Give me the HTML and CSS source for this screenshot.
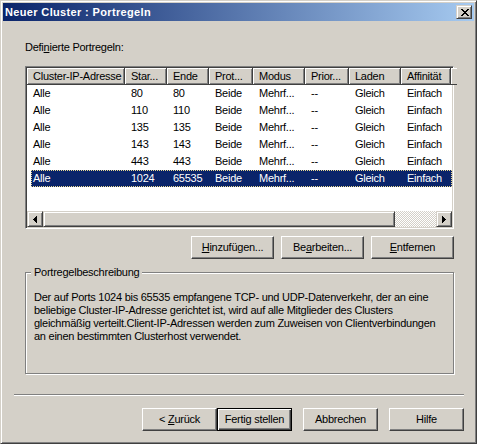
FILE: index.html
```html
<!DOCTYPE html>
<html lang="de">
<head>
<meta charset="utf-8">
<title>Neuer Cluster : Portregeln</title>
<link rel="stylesheet" href="styles.css">
</head>
<body>
<div class="window">
  <div class="titlebar">
    <span class="title">Neuer Cluster : Portregeln</span>
    <button class="close" type="button" aria-label="Schließen">
      <svg width="8" height="7" viewBox="0 0 8 7"><path d="M0 0h2v1h-2zM6 0h2v1h-2zM1 1h2v1h-2zM5 1h2v1h-2zM2 2h4v1h-4zM3 3h2v1h-2zM2 4h4v1h-4zM1 5h2v1h-2zM5 5h2v1h-2zM0 6h2v1h-2zM6 6h2v1h-2z" fill="#000"/></svg>
    </button>
  </div>
  <div class="content">
    <div class="label">Defi<u>n</u>ierte Portregeln:</div>
    <div class="listview">
      <div class="header">
        <span class="hcell">Cluster-IP-Adresse</span>
        <span class="hcell">Star...</span>
        <span class="hcell">Ende</span>
        <span class="hcell">Prot...</span>
        <span class="hcell">Modus</span>
        <span class="hcell">Prior...</span>
        <span class="hcell">Laden</span>
        <span class="hcell">Affinität</span>
        <span class="hcell filler"></span>
      </div>
      <div class="rows">
        <div class="row"><span>Alle</span><span>80</span><span>80</span><span>Beide</span><span>Mehrf...</span><span>--</span><span>Gleich</span><span>Einfach</span></div>
        <div class="row"><span>Alle</span><span>110</span><span>110</span><span>Beide</span><span>Mehrf...</span><span>--</span><span>Gleich</span><span>Einfach</span></div>
        <div class="row"><span>Alle</span><span>135</span><span>135</span><span>Beide</span><span>Mehrf...</span><span>--</span><span>Gleich</span><span>Einfach</span></div>
        <div class="row"><span>Alle</span><span>143</span><span>143</span><span>Beide</span><span>Mehrf...</span><span>--</span><span>Gleich</span><span>Einfach</span></div>
        <div class="row"><span>Alle</span><span>443</span><span>443</span><span>Beide</span><span>Mehrf...</span><span>--</span><span>Gleich</span><span>Einfach</span></div>
        <div class="row selected"><span>Alle</span><span>1024</span><span>65535</span><span>Beide</span><span>Mehrf...</span><span>--</span><span>Gleich</span><span>Einfach</span></div>
      </div>
      <div class="hscroll">
        <span class="sbtn"><svg width="4" height="7" viewBox="0 0 4 7"><path d="M3 0h1v7h-1zM2 1h1v5h-1zM1 2h1v3h-1zM0 3h1v1h-1z" fill="#000"/></svg></span>
        <span class="thumb"></span>
        <span class="track"></span>
        <span class="sbtn"><svg width="4" height="7" viewBox="0 0 4 7"><path d="M0 0h1v7h-1zM1 1h1v5h-1zM2 2h1v3h-1zM3 3h1v1h-1z" fill="#000"/></svg></span>
      </div>
    </div>
    <div class="actions">
      <button class="btn" type="button"><u>H</u>inzufügen...</button>
      <button class="btn" type="button">Be<u>a</u>rbeiten...</button>
      <button class="btn" type="button"><u>E</u>ntfernen</button>
    </div>
    <div class="group">
      <span class="group-label">Portregelbeschreibung</span>
      <p class="desc">Der auf Ports 1024 bis 65535 empfangene TCP- und UDP-Datenverkehr, der an eine<br>beliebige Cluster-IP-Adresse gerichtet ist, wird auf alle Mitglieder des Clusters<br>gleichmäßig verteilt.Client-IP-Adressen werden zum Zuweisen von Clientverbindungen<br>an einen bestimmten Clusterhost verwendet.</p>
    </div>
    <div class="separator"></div>
    <div class="footer">
      <button class="btn wide" type="button">&lt; <u>Z</u>urück</button>
      <button class="btn wide default" type="button">Fertig stellen</button>
      <button class="btn wide spaced" type="button">Abbrechen</button>
      <button class="btn wide spaced" type="button">Hilfe</button>
    </div>
  </div>
</div>
</body>
</html>
```

FILE: styles.css
```css
* { box-sizing: border-box; }
html, body { margin: 0; padding: 0; }
body {
  font-family: "Liberation Sans", Arial, sans-serif;
  font-size: 11px;
  line-height: 13px;
  letter-spacing: -0.25px;
  color: #000;
  background: #D4D0C8;
}
.window {
  width: 477px;
  height: 444px;
  background: #D4D0C8;
  border: 1px solid;
  border-color: #D4D0C8 #404040 #404040 #D4D0C8;
  box-shadow: inset 1px 1px #fff, inset -1px -1px #808080;
  padding: 2px;
  display: flex;
  flex-direction: column;
}
.titlebar {
  flex: none;
  height: 18px;
  background: linear-gradient(to right, #0A246A, #A6CAF0);
  display: flex;
  align-items: center;
  justify-content: space-between;
  padding: 0 2px;
}
.title {
  color: #fff;
  font-weight: bold;
  line-height: 18px;
  letter-spacing: 0.35px;
  white-space: pre;
}
.close {
  width: 16px;
  height: 14px;
  padding: 0 0 0 1px;
  display: flex;
  align-items: center;
  justify-content: center;
  background: #D4D0C8;
  border: 1px solid;
  border-color: #D4D0C8 #404040 #404040 #D4D0C8;
  box-shadow: inset 1px 1px #fff, inset -1px -1px #808080;
}
.close svg { display: block; }
.content {
  flex: 1;
  display: flex;
  flex-direction: column;
  padding: 0 10px 0 11px;
}
.label {
  margin-top: 20px;
  padding-left: 11px;
}
.listview {
  margin: 12px 10px 0 11px;
  height: 163px;
  border: 1px solid;
  border-color: #808080 #fff #fff #808080;
  box-shadow: inset 1px 1px #404040, inset -1px -1px #D4D0C8;
  padding: 1px;
  background: #fff;
  display: flex;
  flex-direction: column;
}
.header {
  flex: none;
  display: grid;
  grid-template-columns: 98px 42px 42px 44px 52px 44px 52px 50px 1fr;
  height: 17px;
}
.hcell {
  background: #D4D0C8;
  border-right: 1px solid #404040;
  border-bottom: 1px solid #404040;
  box-shadow: inset 1px 1px #fff, inset -1px -1px #808080;
  padding-left: 6px;
  line-height: 16px;
  white-space: nowrap;
  overflow: hidden;
}
.hcell.filler { border-right: none; box-shadow: inset 1px 1px #fff; }
.rows {
  flex: 1;
  background: #fff;
}
.row {
  display: grid;
  grid-template-columns: 94px 42px 42px 44px 52px 44px 52px 50px 1fr;
  margin-left: 4px;
  height: 17px;
  line-height: 17px;
}
.row > span {
  padding-left: 6px;
  white-space: nowrap;
  overflow: hidden;
}
.row > span:first-child { padding-left: 2px; }
.row.selected {
  background: #0A246A;
  color: #fff;
  outline: 1px dotted #E8D890;
  outline-offset: -1px;
}
.hscroll {
  flex: none;
  height: 16px;
  display: flex;
}
.sbtn, .thumb {
  background: #D4D0C8;
  border: 1px solid;
  border-color: #D4D0C8 #404040 #404040 #D4D0C8;
  box-shadow: inset 1px 1px #fff, inset -1px -1px #808080;
}
.sbtn {
  flex: none;
  width: 16px;
  display: flex;
  align-items: center;
  justify-content: center;
}
.sbtn svg { display: block; }
.thumb { flex: none; width: 352px; }
.track {
  flex: 1;
  background-color: #fff;
  background-image: conic-gradient(#D4D0C8 0 25%, #fff 0 50%, #D4D0C8 0 75%, #fff 0);
  background-size: 2px 2px;
}
.actions {
  display: flex;
  justify-content: flex-end;
  gap: 7px;
  margin: 7px 10px 0 0;
}
.btn {
  width: 83px;
  height: 23px;
  padding: 0;
  font: inherit;
  letter-spacing: inherit;
  color: #000;
  background: #D4D0C8;
  border: 1px solid;
  border-color: #fff #404040 #404040 #fff;
  box-shadow: inset -1px -1px #808080;
  white-space: nowrap;
}
.btn.wide { width: 75px; }
.btn.default {
  border-color: #000;
  box-shadow: inset 1px 1px #fff, inset -1px -1px #404040, inset -2px -2px #808080;
}
.btn.spaced { margin-left: 11px; }
.group {
  position: relative;
  margin: 13px 10px 0 11px;
  height: 102px;
  border: 1px solid #808080;
  box-shadow: inset 1px 1px #fff, 1px 1px #fff;
  padding: 18px 0 0 8px;
}
.group-label {
  position: absolute;
  left: 5px;
  top: -7px;
  padding: 0 3px;
  background: #D4D0C8;
  line-height: 13px;
  white-space: nowrap;
}
.desc {
  margin: 0;
  white-space: nowrap;
}
.separator {
  margin-top: 20px;
  height: 2px;
  border-top: 1px solid #808080;
  border-bottom: 1px solid #fff;
}
.footer {
  display: flex;
  justify-content: flex-end;
  margin-top: 12px;
}
```
